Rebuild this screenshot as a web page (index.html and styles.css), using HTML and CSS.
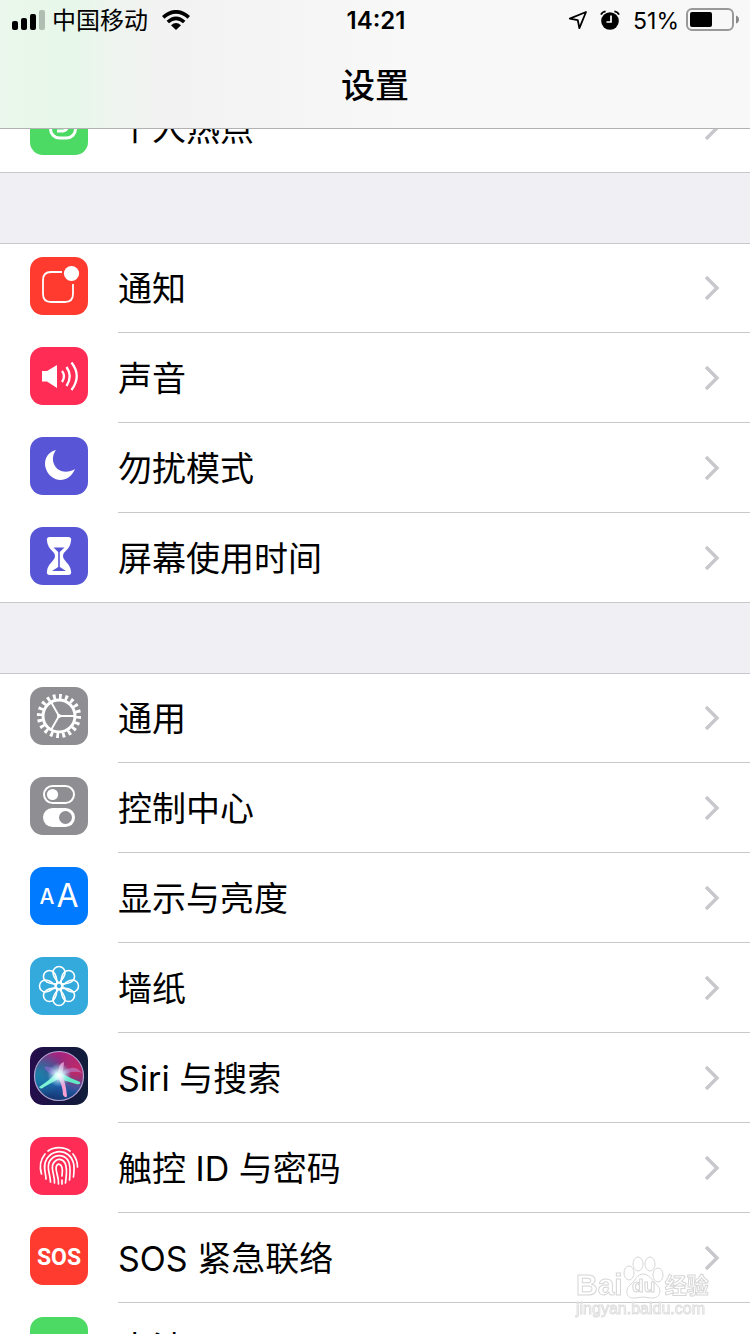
FILE: index.html
```
<!DOCTYPE html>
<html lang="zh-CN">
<head>
<meta charset="utf-8">
<meta name="viewport" content="width=device-width, initial-scale=1">
<title>设置</title>
<link rel="stylesheet" href="styles.css">
</head>
<body>
<svg class="defs" width="0" height="0" aria-hidden="true">
  <symbol id="chevron" viewBox="0 0 16 26"><path d="M2 2 L13 13 L2 24" fill="none" stroke="#c7c7cc" stroke-width="3.4"/></symbol>
</svg>

<header class="topbar">
  <div class="status">
    <div class="status-side">
      <svg class="signal" viewBox="0 0 33 20" aria-hidden="true">
        <rect x="0" y="11" width="6" height="9" rx="2"/><rect x="9" y="8" width="6" height="12" rx="2"/><rect x="18" y="4" width="6" height="16" rx="2"/><rect x="27" y="0" width="6" height="20" rx="2" fill="#b0bdb2"/>
      </svg>
      <span class="carrier">中国移动</span>
      <svg class="wifi" viewBox="0 0 28 20" aria-hidden="true">
        <g fill="none" stroke="#000" stroke-width="3.6"><path d="M1.2 7.4 Q14 -3.8 26.8 7.4"/><path d="M5.8 12 Q14 4.6 22.2 12"/></g>
        <path d="M9 15.2 Q14 11 19 15.2 L14 20 Z"/>
      </svg>
    </div>
    <time class="clock">14:21</time>
    <div class="status-side status-right">
      <svg class="location" viewBox="0 0 20 20" aria-hidden="true"><path d="M18 2 L1.8 8.6 L9.8 10.2 L11.4 18.2 Z" fill="none" stroke="#000" stroke-width="1.8" stroke-linejoin="round"/></svg>
      <svg class="alarm" viewBox="0 0 20 20" aria-hidden="true">
        <circle cx="10" cy="11" r="8.8"/><path d="M1 4.6 Q2.4 1.8 5.6 1.4 M19 4.6 Q17.6 1.8 14.4 1.4" fill="none" stroke="#000" stroke-width="1.8"/><path d="M11 5.5 V12 H6.5" fill="none" stroke="#fff" stroke-width="1.7"/>
      </svg>
      <span class="percent">51%</span>
      <svg class="battery" viewBox="0 0 54 24" aria-hidden="true">
        <rect x="1" y="1" width="46" height="21" rx="5" fill="none" stroke="#999" stroke-width="2"/><rect x="4" y="4" width="22" height="15" rx="2"/><path d="M50 7.5 Q53 8.500 53 11.500 Q53 14.500 50 15.500 Z" fill="#888"/>
      </svg>
    </div>
  </div>
  <h1 class="title">设置</h1>
</header>

<main class="settings">
  <ul class="group">
    <li><a class="row" href="#hotspot">
      <svg class="icon green" viewBox="0 0 58 58" aria-hidden="true"><g fill="none" stroke="#fff" stroke-width="3"><path d="M14 31 Q12 20 20 18 H33 Q38 20 38 27 Q38 33 33 34 H27"/><rect x="20.500" y="22" width="25" height="19" rx="9"/></g></svg>
      <span class="label">个人热点</span><svg class="chevron"><use href="#chevron"/></svg></a></li>
  </ul>

  <ul class="group">
    <li><a class="row" href="#notifications">
      <svg class="icon red" viewBox="0 0 58 58" aria-hidden="true"><path d="M32 15 H21 Q13 15 13 23 V37 Q13 45 21 45 H35 Q43 45 43 37 V27" fill="none" stroke="#fff" stroke-width="1.8"/><circle cx="41.500" cy="16.500" r="7.600" fill="#fff"/></svg>
      <span class="label">通知</span><svg class="chevron"><use href="#chevron"/></svg></a></li>
    <li><a class="row" href="#sounds">
      <svg class="icon pink" viewBox="0 0 58 58" aria-hidden="true"><path d="M12 24 H17 L27 18 V41 L17 34.500 H12 Z" fill="#fff"/><path d="M32 24 Q36 29 32 35 M36.500 20 Q43 29 36.500 39 M41.500 15.500 Q52 29 41.500 43" fill="none" stroke="#fff" stroke-width="2.300"/></svg>
      <span class="label">声音</span><svg class="chevron"><use href="#chevron"/></svg></a></li>
    <li><a class="row" href="#dnd">
      <svg class="icon purple" viewBox="0 0 58 58" aria-hidden="true"><path d="M26 13 C17 15 13 24 16 32 C21 46 39 47 45 32 C37 37 27 35 24 27 C22 22 23 17 26 13 Z" fill="#fff"/></svg>
      <span class="label">勿扰模式</span><svg class="chevron"><use href="#chevron"/></svg></a></li>
    <li><a class="row" href="#screen-time">
      <svg class="icon purple" viewBox="0 0 58 58" aria-hidden="true"><path d="M20 10 H38 Q42 10 41 14 C40 23 33 24 33 29 C33 34 40 36 41 44 Q42 48 38 48 H20 Q16 48 17 44 C18 36 25 34 25 29 C25 24 18 23 17 14 Q16 10 20 10 Z" fill="#fff"/><path d="M23.500 20.500 H34.500 L29.800 25 V40 L36 44 H22 L28.200 40 V25 Z" fill="#5856d6"/></svg>
      <span class="label">屏幕使用时间</span><svg class="chevron"><use href="#chevron"/></svg></a></li>
  </ul>

  <ul class="group">
    <li><a class="row" href="#general">
      <svg class="icon gray" viewBox="0 0 58 58" aria-hidden="true"><g fill="none" stroke="#fff"><circle cx="29" cy="29" r="16" stroke-width="3"/><circle cx="29" cy="29" r="19.600" stroke-width="5" pathLength="200" stroke-dasharray="4.600 5.400"/><path d="M29 29 H45 M29 29 L21 15 M29 29 L21 43" stroke-width="1.900"/></g><circle cx="29" cy="29" r="2" fill="#fff"/></svg>
      <span class="label">通用</span><svg class="chevron"><use href="#chevron"/></svg></a></li>
    <li><a class="row" href="#control-center">
      <svg class="icon gray" viewBox="0 0 58 58" aria-hidden="true"><rect x="14" y="9" width="30" height="17" rx="8.500" fill="none" stroke="#fff" stroke-width="2"/><circle cx="22.500" cy="17.500" r="5.600" fill="#fff"/><rect x="13" y="31" width="32" height="19" rx="9.500" fill="#fff"/><circle cx="35.500" cy="40.500" r="6.500" fill="#8e8e93"/></svg>
      <span class="label">控制中心</span><svg class="chevron"><use href="#chevron"/></svg></a></li>
    <li><a class="row" href="#display">
      <svg class="icon blue" viewBox="0 0 58 58" aria-hidden="true"><text class="small-a" x="17" y="37">A</text><text class="large-a" x="37.500" y="40">A</text></svg>
      <span class="label">显示与亮度</span><svg class="chevron"><use href="#chevron"/></svg></a></li>
    <li><a class="row" href="#wallpaper">
      <svg class="icon cyan" viewBox="0 0 58 58" aria-hidden="true"><g fill="none" stroke="#fff" stroke-width="1.600"><circle cx="29" cy="29" r="3.200"/>
        <g id="petals"><path id="petal" d="M29 26 C26 23 23 20 23 15.500 A6 6 0 0 1 35 15.500 C35 20 32 23 29 26 Z"/><use href="#petal" transform="rotate(90 29 29)"/><use href="#petal" transform="rotate(180 29 29)"/><use href="#petal" transform="rotate(270 29 29)"/></g><use href="#petals" transform="rotate(45 29 29)"/></g></svg>
      <span class="label">墙纸</span><svg class="chevron"><use href="#chevron"/></svg></a></li>
    <li><a class="row" href="#siri">
      <svg class="icon siri" viewBox="0 0 58 58" aria-hidden="true">
        <defs>
          <linearGradient id="orb" x1="0.600" y1="0" x2="0.400" y2="1"><stop offset="0" stop-color="#b3207c"/><stop offset="0.400" stop-color="#5d3a8c"/><stop offset="0.650" stop-color="#1f5fae"/><stop offset="1" stop-color="#15346e"/></linearGradient>
          <radialGradient id="rose" cx="0.850" cy="0.400" r="0.450"><stop offset="0" stop-color="#e0245a" stop-opacity="0.800"/><stop offset="1" stop-color="#e0245a" stop-opacity="0"/></radialGradient>
          <radialGradient id="teal" cx="0.100" cy="0.450" r="0.500"><stop offset="0" stop-color="#168ba8" stop-opacity="0.800"/><stop offset="1" stop-color="#168ba8" stop-opacity="0"/></radialGradient>
          <radialGradient id="core"><stop offset="0" stop-color="#fff"/><stop offset="0.350" stop-color="#dff" stop-opacity="0.800"/><stop offset="1" stop-color="#9df" stop-opacity="0"/></radialGradient>
        </defs>
        <circle cx="29" cy="29" r="24.500" fill="url(#orb)"/><circle cx="29" cy="29" r="24.500" fill="url(#rose)"/><circle cx="29" cy="29" r="24.500" fill="url(#teal)"/>
        <path d="M29 29 Q22 17 14 20 Q19 29 29 29 Z" fill="#9a6bd6" opacity="0.600"/>
        <path d="M28 28 Q28 16 34 15 Q34 22 31 29 Z" fill="#f6a5d8" opacity="0.800"/>
        <path d="M30 27 Q43 15 52 26 Q43 22 30 30 Z" fill="#b987d4" opacity="0.600"/>
        <path d="M27 25 Q20 33 9 40 Q11 43 14 40 Q23 35 32 30 Z" fill="#7df5d4"/>
        <path d="M29 25 Q40 31 50 35 Q51 38 46 37 Q38 34 27 32 Z" fill="#62e8c4"/>
        <path d="M27 29 Q33 38 33 48 Q36 52 37 49 Q36 37 32 28 Z" fill="#f8a0d2"/>
        <circle cx="29" cy="28" r="12" fill="url(#core)"/>
        <circle cx="29" cy="29" r="24.500" fill="none" stroke="#b2a2cf" stroke-width="1.200"/>
      </svg>
      <span class="label">Siri 与搜索</span><svg class="chevron"><use href="#chevron"/></svg></a></li>
    <li><a class="row" href="#touch-id">
      <svg class="icon pink" viewBox="0 0 58 58" aria-hidden="true"><g fill="none" stroke="#fff" stroke-width="1.700" stroke-linecap="round">
        <path d="M18 14 C24 9.500 34 9.500 40 14"/>
        <path d="M11.500 37 C9 29 11 22 15 17 M43 17 C46 21 47.500 26 47.500 30"/>
        <path d="M16 42 C16 36 12 29 17 21.500 C22 14 32 12.500 38 17.500 C45 23 44.500 31 43.500 40"/>
        <path d="M20.500 45 C20.500 37 16 31 19.500 24.500 C24 17 33 17 37.500 22.500 C41.500 28 40 37 39.500 43"/>
        <path d="M24.500 46 C25 38 20.500 32 23 27 C26 21 32 21 35 26 C38 32 36 40 35.500 46"/>
        <path d="M28.500 47 C29 39 24.500 33 26.500 29 C28 26 31 27 32 30.500 C33 34 32 37 32 39 M32 43 V47"/></g></svg>
      <span class="label">触控 ID 与密码</span><svg class="chevron"><use href="#chevron"/></svg></a></li>
    <li><a class="row" href="#sos">
      <svg class="icon red" viewBox="0 0 58 58" aria-hidden="true"><text class="sos" x="29" y="38">SOS</text></svg>
      <span class="label">SOS 紧急联络</span><svg class="chevron"><use href="#chevron"/></svg></a></li>
    <li><a class="row" href="#battery">
      <svg class="icon green" viewBox="0 0 58 58" aria-hidden="true"><rect x="11" y="20" width="33" height="18" rx="4" fill="#fff"/></svg>
      <span class="label">电池</span><svg class="chevron"><use href="#chevron"/></svg></a></li>
  </ul>
</main>

<div class="watermark">
  <div class="brand"><span class="bai">Bai</span><span class="paw"><svg viewBox="0 0 42 44" aria-hidden="true"><g fill="#fff" stroke="#d6d6d6" stroke-width="1"><ellipse cx="6" cy="17" rx="5" ry="7"/><ellipse cx="15" cy="8" rx="5" ry="7"/><ellipse cx="27" cy="8" rx="5" ry="7"/><ellipse cx="35" cy="19" rx="5" ry="7"/><path d="M20 18 C26 18 28 23 33 28 C40 34 37 43 28 42 Q20 40 12 42 C3 43 1 34 8 28 C13 24 14 18 20 18 Z"/></g></svg><span class="du">du</span></span><span class="jingyan">经验</span></div>
  <div class="site">jingyan.baidu.com</div>
</div>
</body>
</html>
```

FILE: styles.css
```
* { box-sizing: border-box; }

body {
  margin: 0;
  height: 100vh;
  overflow: hidden;
  background: #efeff4;
  color: #000;
  font-family: Inter, "Noto Sans CJK SC", sans-serif;
}

.defs { position: absolute; }

.topbar {
  position: fixed;
  inset: 0 0 auto 0;
  z-index: 2;
  height: 129px;
  border-bottom: 1px solid #b2b2b2;
  background: linear-gradient(90deg, #ebf7ec 0, #e6f7e9 70px, #eef4ef 115px, #f2f2f2 160px, #f5f5f5 300px, #f8f8f8 400px);
}

.status {
  display: grid;
  grid-template-columns: 1fr auto 1fr;
  align-items: center;
  height: 40px;
  padding: 0 10px 0 12px;
}

.status-side { display: flex; align-items: center; }
.status-right { justify-content: flex-end; }
.signal { width: 33px; height: 20px; }
.carrier { padding-top: 2px; margin-left: 7px; font-size: 24px; line-height: 38px; }
.wifi { width: 28px; height: 20px; margin-left: 14px; }
.clock { padding-top: 2px; font-size: 24px; font-weight: 600; line-height: 38px; }
.location { width: 20px; height: 20px; }
.alarm { width: 20px; height: 20px; margin-left: 12px; }
.percent { padding-top: 2px; margin-left: 13px; font-size: 23px; line-height: 38px; }
.battery { width: 54px; height: 24px; margin-left: 7px; }

.title {
  margin: 0;
  padding-top: 2px;
  font-size: 34px;
  font-weight: 500;
  line-height: 88px;
  text-align: center;
}

.settings { padding-top: 83px; }

.group {
  margin: 0 0 70px;
  padding: 0;
  list-style: none;
  background: #fff;
  box-shadow: inset 0 1px #c8c7cc, inset 0 -1px #c8c7cc;
}

.row {
  display: flex;
  align-items: center;
  height: 90px;
  padding: 0 30px;
  color: inherit;
  text-decoration: none;
  background: linear-gradient(#c8c7cc, #c8c7cc) 118px 100% / 100% 1px no-repeat;
}

.icon {
  flex: none;
  width: 58px;
  height: 58px;
  margin-bottom: 4px;
  border-radius: 13px;
}

.green { background: #4cd964; }
.red { background: #ff3b30; }
.pink { background: #ff2d55; }
.purple { background: #5856d6; }
.gray { background: #8e8e93; }
.blue { background: #007aff; }
.cyan { background: #34aadc; }
.siri { background: linear-gradient(90deg, #260d4d, #17153f 50%, #111d3b); }

.icon text { fill: #fff; text-anchor: middle; }
.small-a { font-size: 21px; font-weight: 500; }
.large-a { font-size: 32px; }
.sos { font-family: "Liberation Sans Narrow", Roboto, sans-serif; font-size: 23px; font-weight: 700; }

.label {
  flex: 1;
  margin-left: 30px;
  padding-top: 2px;
  font-size: 34px;
  line-height: 50px;
}

.chevron { flex: none; width: 16px; height: 26px; }

.watermark {
  position: fixed;
  right: 38px;
  bottom: 16px;
  z-index: 3;
  width: 136px;
  color: #fff;
  font-family: "Liberation Sans", "Noto Sans CJK SC", sans-serif;
  -webkit-text-stroke: 1px #d6d6d6;
  pointer-events: none;
}

.brand { display: flex; align-items: flex-end; height: 46px; }
.bai { font-size: 30px; font-weight: 700; line-height: 30px; }
.paw { display: grid; width: 42px; height: 44px; }
.paw svg, .du { grid-area: 1 / 1; }
.du { align-self: end; justify-self: center; font-size: 19px; font-weight: 700; line-height: 28px; }
.jingyan { font-size: 22px; font-weight: 700; line-height: 28px; }
.site { font-size: 16px; line-height: 18px; -webkit-text-stroke: 1px #dedede; }
```
